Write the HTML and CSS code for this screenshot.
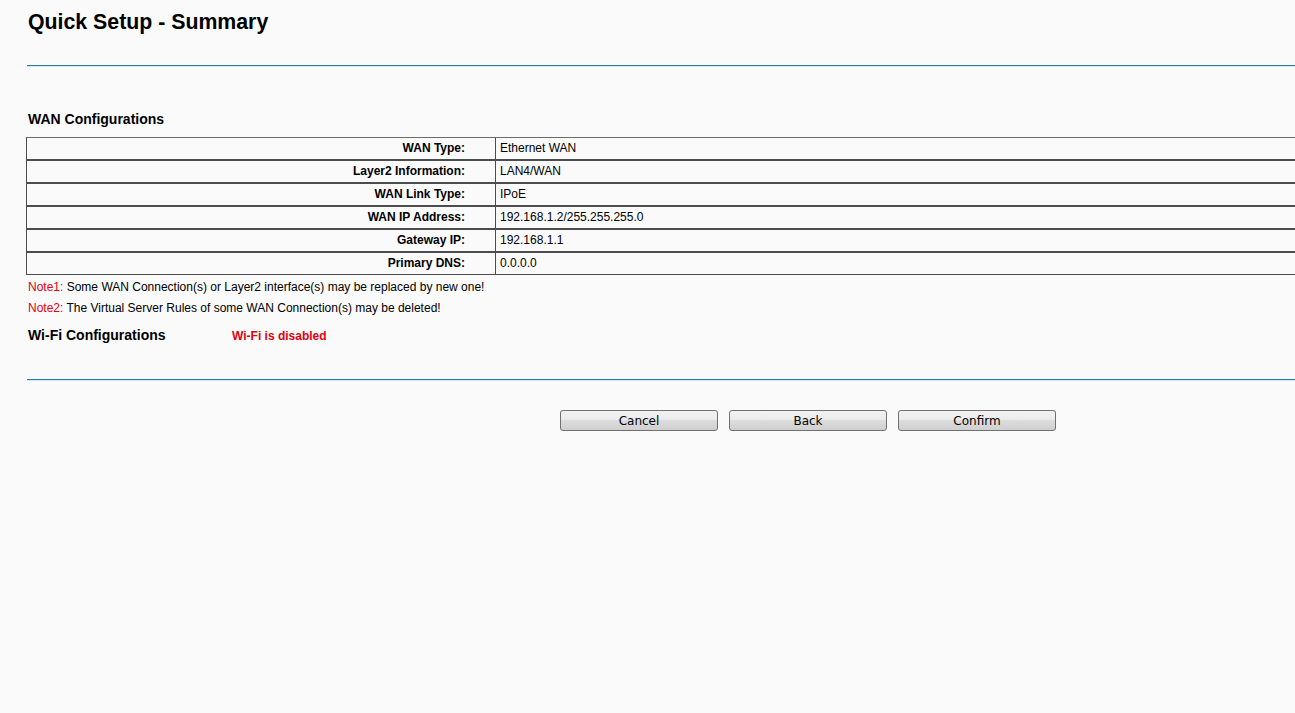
FILE: index.html
```html
<!DOCTYPE html>
<html lang="en">
<head>
    <meta charset="UTF-8">
    <title>Quick Setup - Summary</title>
    <link rel="stylesheet" href="styles.css">
</head>
<body>
    <div class="page">
        <h1 class="title">Quick Setup - Summary</h1>
        <div class="rule"></div>

        <h2 class="section-title">WAN Configurations</h2>
        <table class="info-table">
            <tr><td class="label">WAN Type:</td><td class="value">Ethernet WAN</td></tr>
            <tr><td class="label">Layer2 Information:</td><td class="value">LAN4/WAN</td></tr>
            <tr><td class="label">WAN Link Type:</td><td class="value">IPoE</td></tr>
            <tr><td class="label">WAN IP Address:</td><td class="value">192.168.1.2/255.255.255.0</td></tr>
            <tr><td class="label">Gateway IP:</td><td class="value">192.168.1.1</td></tr>
            <tr><td class="label">Primary DNS:</td><td class="value">0.0.0.0</td></tr>
        </table>

        <p class="note"><span class="note-tag">Note1:</span> Some WAN Connection(s) or Layer2 interface(s) may be replaced by new one!</p>
        <p class="note"><span class="note-tag">Note2:</span> The Virtual Server Rules of some WAN Connection(s) may be deleted!</p>

        <div class="wifi-row">
            <h2 class="section-title wifi-title">Wi-Fi Configurations</h2>
            <span class="wifi-status">Wi-Fi is disabled</span>
        </div>

        <div class="rule rule-bottom"></div>

        <div class="actions">
            <button class="btn">Cancel</button>
            <button class="btn">Back</button>
            <button class="btn">Confirm</button>
        </div>
    </div>
</body>
</html>
```

FILE: styles.css
```css
html, body {
    overflow: hidden;
}

body {
    margin: 0;
    background-color: #fafafa;
    font-family: "Liberation Sans", Arial, sans-serif;
    font-size: 12px;
    color: #000;
}

.page {
    padding-left: 26px;
    width: 1290px;
}

.title {
    margin: 0;
    padding-top: 10px;
    padding-left: 2px;
    font-size: 21.3px;
    font-weight: bold;
    line-height: 24px;
}

.rule {
    margin-top: 31px;
    margin-left: 1px;
    height: 1px;
    background-color: #2b7aa6;
    border-bottom: 1px solid #d6eaf3;
}

.section-title {
    margin: 43px 0 0 2px;
    font-size: 14px;
    font-weight: bold;
    line-height: 18px;
}

.info-table {
    margin-top: 9px;
    width: 100%;
    border-collapse: separate;
    border-spacing: 0;
}

.info-table td {
    height: 21px;
    padding: 0;
    border-top: 1px solid #4d4d4d;
    border-bottom: 1px solid #4d4d4d;
    line-height: 21px;
}

.info-table tr:first-child td {
    border-top-color: #6a6a6a;
}

.info-table .label {
    width: 438px;
    padding-right: 30px;
    border-left: 1px solid #4d4d4d;
    text-align: right;
    font-weight: bold;
}

.info-table .value {
    padding-left: 4px;
    border-left: 1px solid #4d4d4d;
}

.note {
    margin: 4px 0 0 2px;
    line-height: 17px;
}

.note + .note {
    margin-top: 4px;
}

.note-tag {
    color: #e3000f;
}

.wifi-row {
    display: flex;
    align-items: baseline;
    margin-top: 9px;
}

.wifi-title {
    margin-top: 0;
    width: 204px;
}

.wifi-status {
    color: #e3000f;
    font-weight: bold;
}

.rule-bottom {
    margin-top: 35px;
}

.actions {
    display: flex;
    gap: 11px;
    margin-top: 29px;
    padding-left: 534px;
}

.btn {
    width: 158px;
    height: 21px;
    padding: 1px 0 0;
    border: 1px solid #707070;
    border-radius: 3px;
    background: linear-gradient(#f2f2f2 0%, #ebebeb 45%, #dddddd 50%, #cfcfcf 100%);
    font-family: "DejaVu Sans", Tahoma, sans-serif;
    font-size: 12px;
    color: #000;
}
```
